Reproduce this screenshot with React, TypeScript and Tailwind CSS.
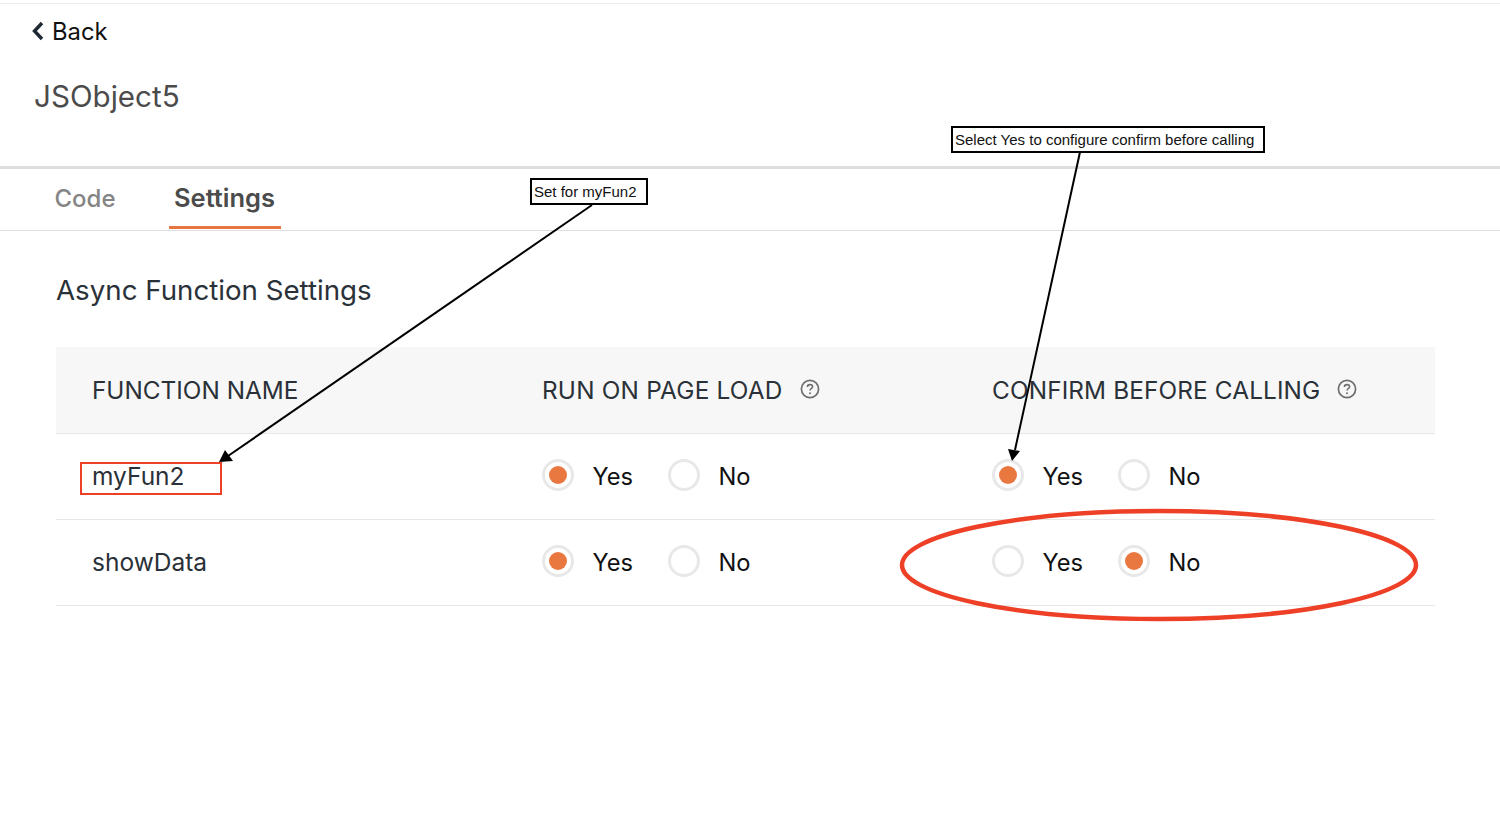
const font = { fontFamily: "Inter, 'Noto Sans', sans-serif" };

const Radio = ({ label, checked }: { label: string; checked: boolean }) => {
  return (
    <div className="flex items-center">
      <span className="flex size-[32px] items-center justify-center rounded-full border-[3px] border-[#e8e8e8] -translate-y-[2px]">
        {checked && <span className="size-[18px] rounded-full bg-[#e97740]" />}
      </span>
      <span className="ml-[18.5px] text-[23.7px] leading-none text-[#111]">{label}</span>
    </div>
  );
};

const YesNo = ({ value }: { value: "yes" | "no" }) => {
  return (
    <div className="flex items-center">
      <div className="w-[126px]">
        <Radio label="Yes" checked={value === "yes"} />
      </div>
      <Radio label="No" checked={value === "no"} />
    </div>
  );
};

const Help = () => (
  <svg width="20" height="20" viewBox="0 0 20 20" fill="none" className="ml-[17px] -translate-y-[1px]">
    <circle cx="10" cy="10" r="8.6" stroke="#6f6f6f" strokeWidth="1.7" />
    <path d="M7.4 8c0-1.5 1.1-2.4 2.6-2.4s2.6.9 2.6 2.2c0 1.9-2.6 1.9-2.6 3.7" stroke="#6f6f6f" strokeWidth="1.6" />
    <circle cx="10" cy="14.2" r="1" fill="#6f6f6f" />
  </svg>
);

const Row = ({ name, load, confirm }: { name: string; load: "yes" | "no"; confirm: "yes" | "no" }) => {
  return (
    <div className="grid h-[86px] grid-cols-[450px_450px_1fr] items-center border-b border-[#e7e7e7] pl-[36px]">
      <span className="text-[24.5px] leading-none text-[#2b3138]">{name}</span>
      <YesNo value={load} />
      <YesNo value={confirm} />
    </div>
  );
};

// the arrows and the ellipse drawn on top of the screenshot
const Annotations = () => (
  <svg width="1500" height="832" className="pointer-events-none absolute left-0 top-0">
    <line x1="592" y1="205" x2="228" y2="456" stroke="#000" strokeWidth="2" />
    <path d="M219 462 L225 450 L233 461 Z" fill="#000" />
    <line x1="1080" y1="152" x2="1015" y2="450" stroke="#000" strokeWidth="2" />
    <path d="M1012 461 L1008 449 L1020 451 Z" fill="#000" />
    <ellipse cx="1159" cy="565" rx="257" ry="54" fill="none" stroke="#ee4027" strokeWidth="4.5" />
  </svg>
);

const Callout = ({ text, className }: { text: string; className: string }) => (
  <div
    className={`absolute flex h-[27px] items-center border-2 border-black bg-white pl-[2px] text-[15px] leading-none text-[#111] ${className}`}
    style={{ fontFamily: "'Liberation Sans', Arial, sans-serif" }}
  >
    {text}
  </div>
);

export default function App() {
  return (
    <div className="relative h-[832px] w-[1500px] overflow-hidden bg-white" style={font}>
      <div className="mt-[3px] h-[1px] bg-[#ececec]" />
      <div className="flex h-[54px] items-center pl-[32px] pt-[1px]">
        <svg width="12" height="20" viewBox="0 0 12 20" fill="none" className="-translate-y-[1px]">
          <path d="M10 2 L2.5 10 L10 18" stroke="#1f2933" strokeWidth="3.4" />
        </svg>
        <span className="ml-[8px] text-[23.8px] leading-none text-[#111]">Back</span>
      </div>
      <div className="h-[108px] pl-[34px] pt-[19px] text-[29.6px] leading-[38px] text-[#4b4b4b]">JSObject5</div>
      <div className="h-[3px] bg-[#dfdddd]" />
      <div className="flex h-[62px] border-b border-[#e0e0e0]">
        <div className="flex h-[59px] items-center pl-[54.5px] text-[24px] font-medium text-[#858585]">Code</div>
        <div className="ml-[53px] flex h-[60px] w-[112px] items-center justify-center border-b-[3px] border-[#e8743f] pt-[2px] text-[25.5px] font-semibold text-[#4b4b4b]">
          Settings
        </div>
      </div>
      <div className="px-[56px] pt-[42px] pr-[65px]">
        <h2 className="text-[27.7px] leading-[34px] text-[#2b3138]">Async Function Settings</h2>
        <div className="mt-[40px]">
          <div className="grid h-[87px] grid-cols-[450px_450px_1fr] items-center border-b border-[#e7e7e7] bg-[#f7f7f7] pl-[36px] text-[24.35px] leading-none text-[#2b3138]">
            <span>FUNCTION NAME</span>
            <div className="flex items-center tracking-[0.2px]">
              RUN ON PAGE LOAD
              <Help />
            </div>
            <div className="flex items-center tracking-[0.13px]">
              CONFIRM BEFORE CALLING
              <Help />
            </div>
          </div>
          <Row name="myFun2" load="yes" confirm="yes" />
          <Row name="showData" load="yes" confirm="no" />
        </div>
      </div>
      <Callout text="Set for myFun2" className="left-[530px] top-[178px] w-[118px]" />
      <Callout text="Select Yes to configure confirm before calling" className="left-[951px] top-[126px] w-[314px]" />
      <div className="absolute left-[80px] top-[462px] h-[33px] w-[142px] border-2 border-[#ee4027]" />
      <Annotations />
    </div>
  );
}
